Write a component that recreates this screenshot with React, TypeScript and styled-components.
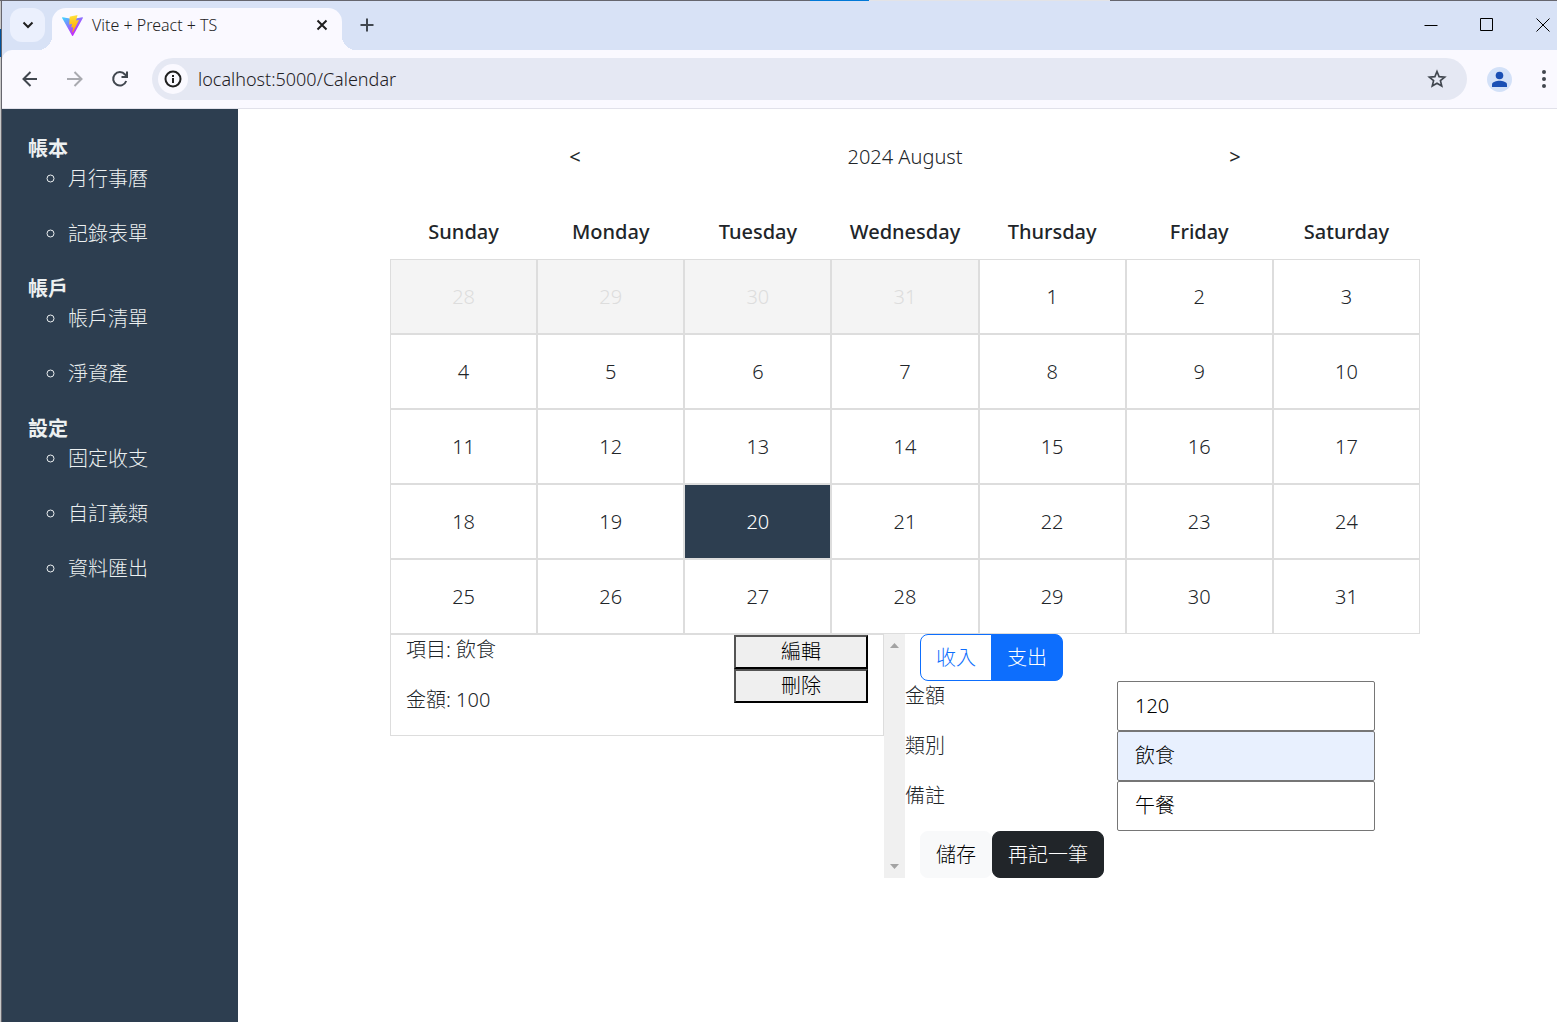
import React from "react";
import styled, { createGlobalStyle, css } from "styled-components";

const Global = createGlobalStyle`
  *, *::before, *::after { box-sizing: border-box; }
  body {
    margin: 0;
    background: #fff;
    color: #212529;
    font-family: "Noto Sans", "Noto Sans CJK TC", sans-serif;
    font-size: 20px;
    font-weight: 300;
    line-height: 30px;
  }
  button, input { font: inherit; }
`;

const Window = styled.div`
  display: flex;
  flex-direction: column;
  min-height: 100vh;
  padding: 1px 0 0 2px;
  background:
    linear-gradient(90deg, #66666e 810px, #0078d7 810px 869px, #e3e3e6 869px 1110px, #66666e 1110px) 0 0 / 100% 1px no-repeat,
    linear-gradient(#66666e, #66666e) 1px 0 / 1px 100% no-repeat,
    linear-gradient(#c8c8c8 29px, #00529c 29px 57px, #c8c8c8 57px) 0 0 / 1px 100% no-repeat;
`;

const Chrome = styled.div`
  background: #d8e2f6;
`;

const TabStrip = styled.header`
  display: flex;
  align-items: flex-start;
  height: 49px;
  padding: 7px 0 0 8px;
`;

const IconButton = styled.button<{ $w: number; $h?: number; $bg?: string; $color?: string; $radius?: number }>`
  display: flex;
  align-items: center;
  justify-content: center;
  flex: none;
  width: ${(p) => p.$w}px;
  height: ${(p) => p.$h ?? p.$w}px;
  padding: 0;
  border: 0;
  border-radius: ${(p) => p.$radius ?? 0}px;
  background: ${(p) => p.$bg ?? "transparent"};
  color: ${(p) => p.$color ?? "#41474f"};
`;

const Tab = styled.div`
  position: relative;
  display: flex;
  align-items: center;
  width: 290px;
  height: 42px;
  margin-left: 7px;
  padding: 0 10px 8px;
  border-radius: 14px 14px 0 0;
  background: #faf9ff;
  color: #1f1f1f;
  font-size: 16px;

  &::before, &::after {
    content: "";
    position: absolute;
    bottom: 0;
    width: 14px;
    height: 14px;
  }
  &::before {
    left: -14px;
    background: radial-gradient(circle at 0 0, transparent 14px, #faf9ff 14px);
  }
  &::after {
    right: -14px;
    background: radial-gradient(circle at 100% 0, transparent 14px, #faf9ff 14px);
  }
`;

const TabTitle = styled.span`
  flex: 1;
  margin-left: 9px;
`;

const NewTab = styled.div`
  margin-left: 10px;
`;

const WindowControls = styled.div`
  display: flex;
  gap: 32px;
  margin-left: auto;
  padding-right: 2px;
`;

const Toolbar = styled.nav`
  display: flex;
  align-items: center;
  height: 59px;
  padding-left: 5px;
  border-bottom: 1px solid #e1e1ea;
  border-radius: 10px 0 0 0;
  background: #faf9ff;
`;

const Address = styled.div`
  display: flex;
  align-items: center;
  flex: 1;
  height: 42px;
  margin: 0 20px 0 10px;
  padding: 0 14px 0 6px;
  border-radius: 21px;
  background: #e5e8f3;
`;

const Url = styled.input`
  flex: 1;
  min-width: 0;
  margin: 0 10px;
  padding: 0;
  border: 0;
  background: transparent;
  color: #1f2024;
  font-size: 18px;
`;

const Profile = styled.div`
  margin-right: 19px;
`;

const Page = styled.div`
  display: flex;
  flex: 1;
`;

const Sidebar = styled.aside`
  flex: none;
  width: 236px;
  padding: 25px 26px;
  background: #2d3e50;
  color: #ecf0f1;
`;

const SideTitle = styled.h2`
  margin: 0;
  font-size: 20px;
  font-weight: 700;
  line-height: 30px;
`;

const SideList = styled.ul`
  margin: 0;
  padding-left: 40px;
  list-style: circle;
`;

const SideItem = styled.li`
  margin-bottom: 25px;
`;

const SideLink = styled.a`
  color: inherit;
  text-decoration: none;
`;

const Main = styled.main`
  flex: 1;
  padding: 10px 137px 0 152px;
  background: #fff;
`;

const MonthBar = styled.div`
  display: grid;
  grid-template-columns: repeat(3, 1fr);
  align-items: center;
  justify-items: center;
  height: 76px;
  padding: 0 20px;
`;

const MonthButton = styled.button`
  padding: 0 10px;
  border: 0;
  background: transparent;
  color: #212529;
  font-weight: 400;
`;

const Calendar = styled.table`
  width: 100%;
  border-collapse: separate;
  border-spacing: 0;
  table-layout: fixed;
  text-align: center;
`;

const DayName = styled.th`
  height: 64px;
  padding: 9px 0 0;
  font-weight: 500;
`;

const Day = styled.td<{ $muted?: boolean; $selected?: boolean }>`
  height: 75px;
  padding: 0;
  border: 1px solid #ddd;
  ${(p) => p.$muted && css`background: #f4f4f4; color: #ddd;`}
  ${(p) => p.$selected && css`background: #2d3e50; color: #fff;`}
`;

const Details = styled.div`
  display: grid;
  grid-template-columns: 1fr 1fr;
`;

const Records = styled.section`
  display: flex;
  align-items: flex-start;
`;

const Record = styled.article`
  display: flex;
  flex: 1;
  justify-content: space-between;
  padding: 0 15px;
  border: 1px solid #ddd;
`;

const RecordLine = styled.p`
  margin: 0 0 20px;
`;

const RecordActions = styled.div`
  display: flex;
  flex-direction: column;
  width: 134px;
`;

const PlainButton = styled.button`
  height: 34px;
  padding: 0;
  border: 2px outset #000;
  background: #efefef;
  color: #000;
  line-height: 28px;
`;

const ScrollTrack = styled.div`
  display: flex;
  flex-direction: column;
  align-self: stretch;
  align-items: center;
  justify-content: space-between;
  width: 21px;
  padding: 9px 0;
  background: #f0f0f0;
`;

const Entry = styled.form`
  display: flex;
  flex-direction: column;
`;

const ButtonRow = styled.div`
  display: flex;
  padding-left: 15px;
`;

const Button = styled.button<{ $kind: "outline" | "primary" | "light" | "dark" }>`
  height: 47px;
  padding: 0 15px;
  border: 1px solid;
  border-radius: 8px;
  ${(p) => p.$kind === "outline" && css`
    border-color: #0d6efd;
    border-radius: 8px 0 0 8px;
    background: #fff;
    color: #0d6efd;
  `}
  ${(p) => p.$kind === "primary" && css`
    margin-left: -1px;
    border-color: #0d6efd;
    border-radius: 0 8px 8px 0;
    background: #0d6efd;
    color: #fff;
  `}
  ${(p) => p.$kind === "light" && css`
    border-color: #f8f9fa;
    background: #f8f9fa;
    color: #000;
  `}
  ${(p) => p.$kind === "dark" && css`
    border-color: #212529;
    background: #212529;
    color: #fff;
  `}
`;

const Field = styled.div`
  display: grid;
  grid-template-columns: 212px 258px;
  height: 50px;
`;

const Label = styled.label``;

const TextInput = styled.input<{ $filled?: boolean }>`
  width: 100%;
  padding: 0 17px;
  border: 1px solid #767676;
  border-radius: 2px;
  background: ${(p) => (p.$filled ? "#e8f0fe" : "#fff")};
  color: #000;
`;

const sections = [
  { title: "帳本", items: ["月行事曆", "記錄表單"] },
  { title: "帳戶", items: ["帳戶清單", "淨資產"] },
  { title: "設定", items: ["固定收支", "自訂義類", "資料匯出"] },
];

const dayNames = ["Sunday", "Monday", "Tuesday", "Wednesday", "Thursday", "Friday", "Saturday"];

const weeks = [
  [28, 29, 30, 31, 1, 2, 3],
  [4, 5, 6, 7, 8, 9, 10],
  [11, 12, 13, 14, 15, 16, 17],
  [18, 19, 20, 21, 22, 23, 24],
  [25, 26, 27, 28, 29, 30, 31],
];

const fields = [
  { id: "amount", label: "金額", value: "120" },
  { id: "category", label: "類別", value: "飲食", filled: true },
  { id: "note", label: "備註", value: "午餐" },
];

function Glyph({ d, size = 20, width = 2, box = 24 }: { d: string; size?: number; width?: number; box?: number }) {
  return (
    <svg width={size} height={size} viewBox={`0 0 ${box} ${box}`} fill="none" stroke="currentColor" strokeWidth={width}>
      <path d={d} />
    </svg>
  );
}

function ViteLogo() {
  return (
    <svg width="21" height="21" viewBox="0 0 256 257">
      <defs>
        <linearGradient id="vite-a" x1="-.8%" x2="57.6%" y1="7.7%" y2="78.4%">
          <stop offset="0%" stopColor="#41D1FF" />
          <stop offset="100%" stopColor="#BD34FE" />
        </linearGradient>
        <linearGradient id="vite-b" x1="43.4%" x2="50.3%" y1="2.2%" y2="89%">
          <stop offset="0%" stopColor="#FFEA83" />
          <stop offset="8.3%" stopColor="#FFDD35" />
          <stop offset="100%" stopColor="#FFA800" />
        </linearGradient>
      </defs>
      <path fill="url(#vite-a)" d="M255.153 37.938 134.897 252.976c-2.483 4.44-8.862 4.466-11.382.048L.875 37.958c-2.746-4.814 1.371-10.646 6.827-9.67l120.385 21.517a6.537 6.537 0 0 0 2.322-.004l117.867-21.483c5.438-.991 9.574 4.796 6.877 9.62Z" />
      <path fill="url(#vite-b)" d="M185.432.063 96.44 17.501a3.268 3.268 0 0 0-2.634 3.014l-5.474 92.456a3.268 3.268 0 0 0 3.997 3.378l24.777-5.718c2.318-.535 4.413 1.507 3.936 3.838l-7.361 36.047c-.495 2.426 1.782 4.5 4.151 3.78l15.304-4.649c2.372-.72 4.652 1.36 4.15 3.788l-11.698 56.621c-.732 3.542 3.979 5.473 5.943 2.437l1.313-2.028 72.516-144.72c1.215-2.423-.88-5.186-3.54-4.672l-25.505 4.922c-2.396.462-4.435-1.77-3.759-4.114l16.646-57.705c.677-2.35-1.37-4.583-3.769-4.113Z" />
    </svg>
  );
}

export default function App() {
  return (
    <Window>
      <Global />
      <Chrome>
        <TabStrip>
          <IconButton $w={35} $h={34} $radius={12} $bg="#ebf0fd" $color="#1f1f1f" aria-label="Search tabs">
            <Glyph size={16} box={16} width={2} d="M3.500 5.500 8 10l4.500-4.500" />
          </IconButton>
          <Tab>
            <ViteLogo />
            <TabTitle>Vite + Preact + TS</TabTitle>
            <IconButton $w={20} $color="#1f1f1f" aria-label="Close tab">
              <Glyph size={16} box={16} width={2} d="m3.500 3.500 9 9m0-9-9 9" />
            </IconButton>
          </Tab>
          <NewTab>
            <IconButton $w={30} $h={34} aria-label="New tab">
              <Glyph size={16} box={16} width={2} d="M8 1.500v13M1.500 8h13" />
            </IconButton>
          </NewTab>
          <WindowControls>
            <IconButton $w={24} $h={34} $color="#000" aria-label="Minimize">
              <Glyph size={14} box={14} width={1} d="M.5 7.500h13" />
            </IconButton>
            <IconButton $w={24} $h={34} $color="#000" aria-label="Maximize">
              <Glyph size={14} box={14} width={1} d="M.5.5h12v12H.5z" />
            </IconButton>
            <IconButton $w={24} $h={34} $color="#000" aria-label="Close window">
              <Glyph size={14} box={14} width={1} d="m.5.5 13 13m0-13-13 13" />
            </IconButton>
          </WindowControls>
        </TabStrip>
        <Toolbar>
          <IconButton $w={45} aria-label="Back">
            <Glyph size={18} box={18} d="M16 9H3M9.500 2 2.500 9l7 7" />
          </IconButton>
          <IconButton $w={45} $color="#a9aab0" aria-label="Forward">
            <Glyph size={18} box={18} d="M1 9h14M8.500 2l7 7-7 7" />
          </IconButton>
          <IconButton $w={45} aria-label="Reload">
            <Glyph size={18} box={18} d="M15.200 11A6.700 6.700 0 1 1 14 4.500L16 7M16 1.500V7h-5.500" />
          </IconButton>
          <Address>
            <IconButton $w={30} $radius={15} $bg="#faf9ff" $color="#1f1f1f" aria-label="Site information">
              <Glyph size={18} box={18} d="M9 1.500a7.500 7.500 0 1 0 0 15 7.500 7.500 0 0 0 0-15ZM9 8v5M9 5v2" />
            </IconButton>
            <Url aria-label="Address" defaultValue="localhost:5000/Calendar" />
            <IconButton $w={32} aria-label="Bookmark">
              <Glyph size={20} box={24} d="m12 3 2.500 6.200 6.700.500-5.100 4.300 1.600 6.500L12 17l-5.700 3.500L7.900 14 2.800 9.700l6.700-.500z" />
            </IconButton>
          </Address>
          <Profile>
            <IconButton $w={25} $radius={13} $bg="#d3e1f8" $color="#1a4fb4" aria-label="Profile">
              <svg width="17" height="17" viewBox="0 0 17 17" fill="currentColor">
                <circle cx="8.500" cy="4.500" r="3.800" />
                <path d="M1 16v-2.500C1 11 5.500 9.800 8.500 9.800s7.500 1.200 7.500 3.700V16z" />
              </svg>
            </IconButton>
          </Profile>
          <IconButton $w={26} $h={34} aria-label="Menu">
            <svg width="6" height="20" viewBox="0 0 6 20" fill="currentColor">
              <circle cx="3" cy="3" r="2" />
              <circle cx="3" cy="10" r="2" />
              <circle cx="3" cy="17" r="2" />
            </svg>
          </IconButton>
        </Toolbar>
      </Chrome>
      <Page>
        <Sidebar>
          {sections.map((s) => (
            <React.Fragment key={s.title}>
              <SideTitle>{s.title}</SideTitle>
              <SideList>
                {s.items.map((item) => (
                  <SideItem key={item}>
                    <SideLink href="#">{item}</SideLink>
                  </SideItem>
                ))}
              </SideList>
            </React.Fragment>
          ))}
        </Sidebar>
        <Main>
          <MonthBar>
            <MonthButton aria-label="Previous month">&lt;</MonthButton>
            <span>2024 August</span>
            <MonthButton aria-label="Next month">&gt;</MonthButton>
          </MonthBar>
          <Calendar>
            <thead>
              <tr>
                {dayNames.map((d) => (
                  <DayName key={d}>{d}</DayName>
                ))}
              </tr>
            </thead>
            <tbody>
              {weeks.map((week, w) => (
                <tr key={w}>
                  {week.map((d) => (
                    <Day key={d} $muted={w === 0 && d > 7} $selected={d === 20}>
                      {d}
                    </Day>
                  ))}
                </tr>
              ))}
            </tbody>
          </Calendar>
          <Details>
            <Records>
              <Record>
                <div>
                  <RecordLine>項目: 飲食</RecordLine>
                  <RecordLine>金額: 100</RecordLine>
                </div>
                <RecordActions>
                  <PlainButton>編輯</PlainButton>
                  <PlainButton>刪除</PlainButton>
                </RecordActions>
              </Record>
              <ScrollTrack>
                <svg width="9" height="5" viewBox="0 0 9 5" fill="#a3a3a3"><path d="M0 5 4.500 0 9 5z" /></svg>
                <svg width="9" height="5" viewBox="0 0 9 5" fill="#a3a3a3"><path d="m0 0 4.500 5L9 0z" /></svg>
              </ScrollTrack>
            </Records>
            <Entry onSubmit={(e) => e.preventDefault()}>
              <ButtonRow>
                <Button type="button" $kind="outline">收入</Button>
                <Button type="button" $kind="primary">支出</Button>
              </ButtonRow>
              {fields.map((f) => (
                <Field key={f.id}>
                  <Label htmlFor={f.id}>{f.label}</Label>
                  <TextInput id={f.id} defaultValue={f.value} $filled={f.filled} />
                </Field>
              ))}
              <ButtonRow>
                <Button type="submit" $kind="light">儲存</Button>
                <Button type="button" $kind="dark">再記一筆</Button>
              </ButtonRow>
            </Entry>
          </Details>
        </Main>
      </Page>
    </Window>
  );
}
